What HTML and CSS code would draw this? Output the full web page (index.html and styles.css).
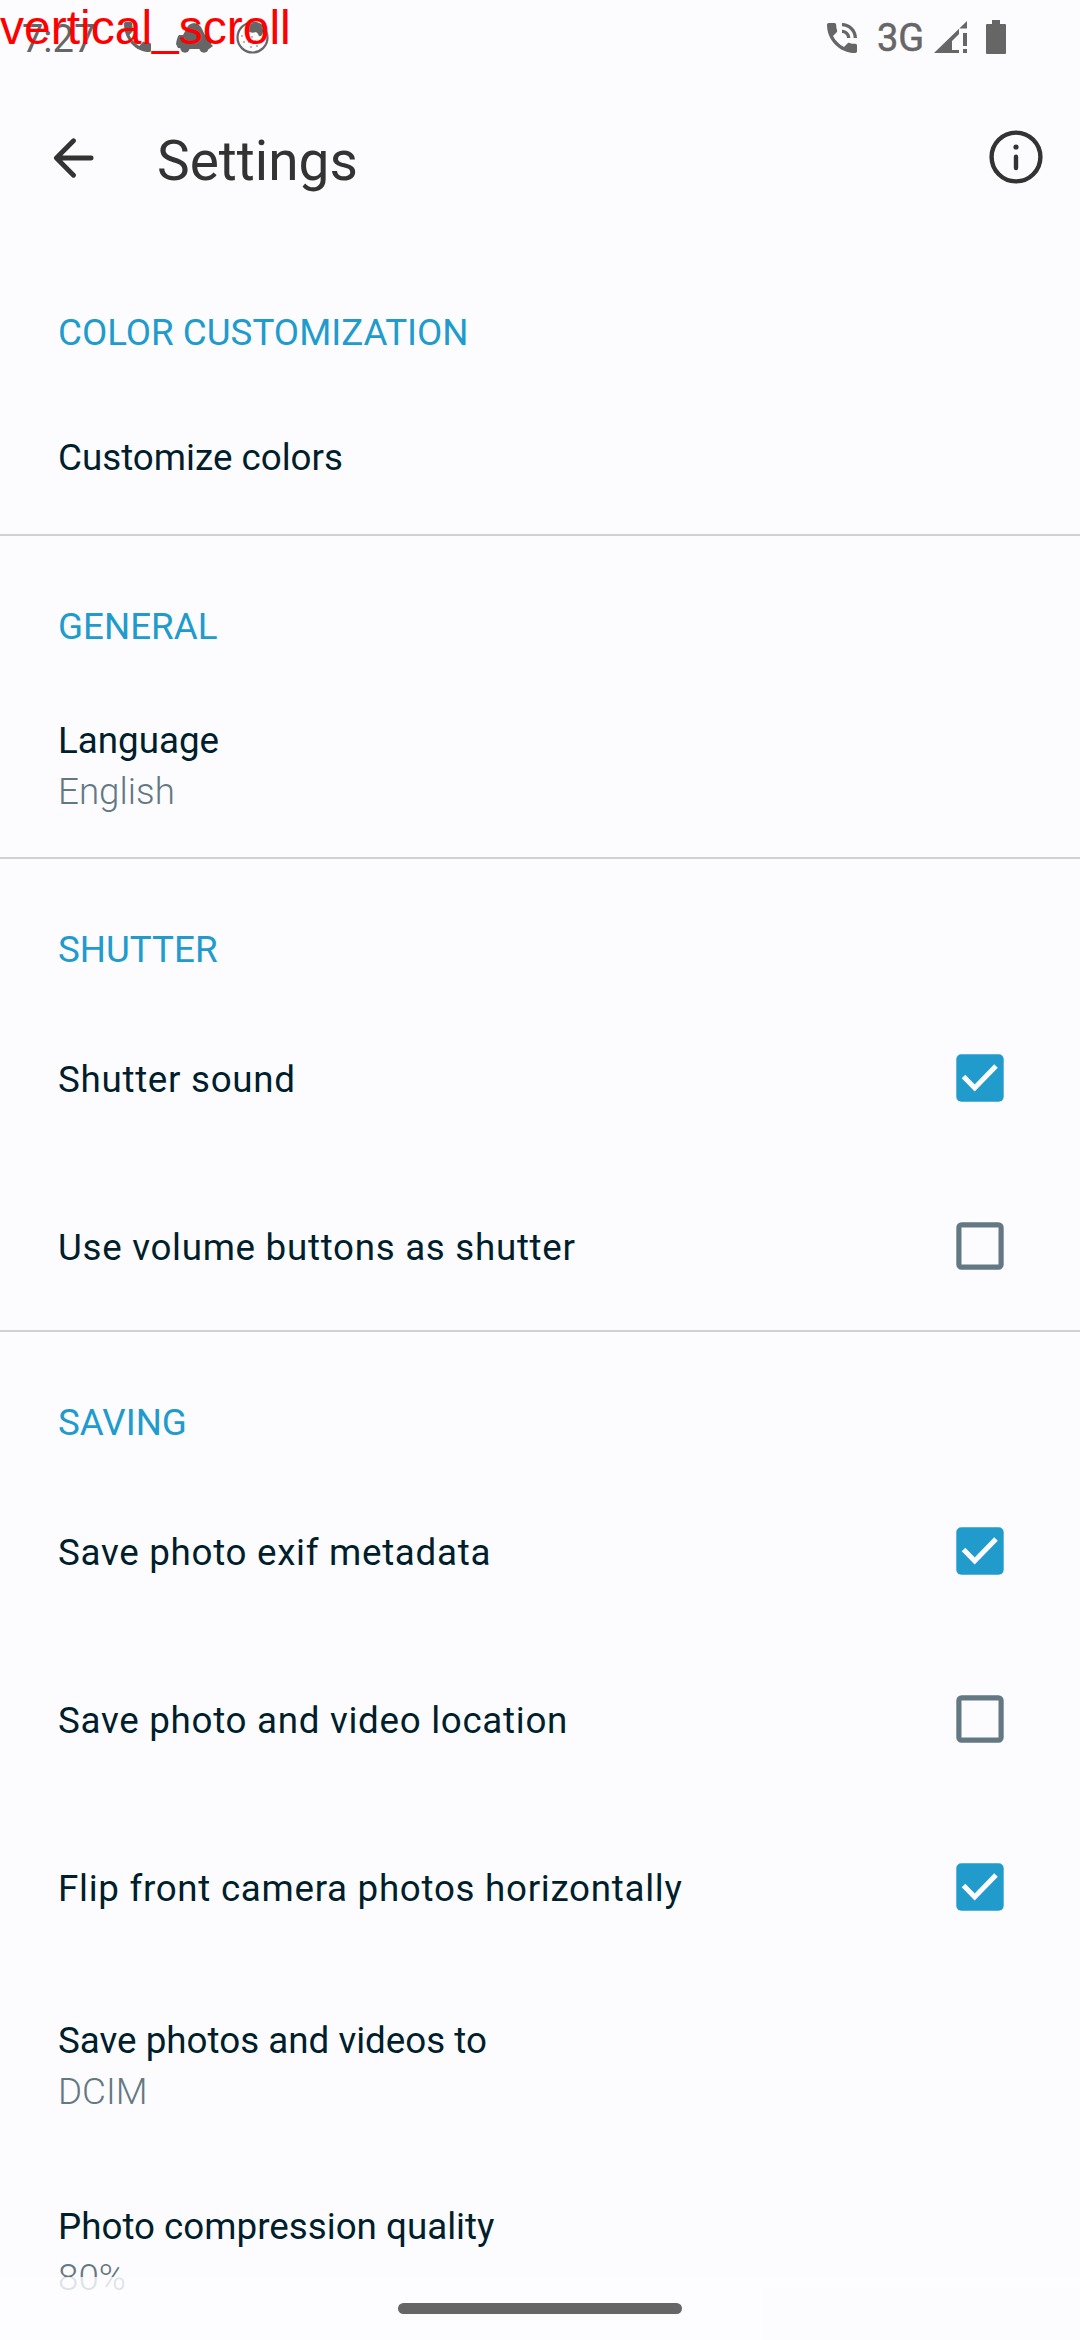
FILE: index.html
```html
<!DOCTYPE html>
<html lang="en">
<head>
<meta charset="utf-8">
<title>Settings</title>
<link rel="stylesheet" href="styles.css">
</head>
<body>
<div class="screen">
  <div class="status">
    <div class="status-left">
      <span class="clock">7:27</span>
      <svg class="ic-call" viewBox="3 3 18 18" preserveAspectRatio="none"><path d="M20 15.5c-1.25 0-2.45-.2-3.57-.57-.35-.11-.74-.03-1.02.24l-2.2 2.2c-2.83-1.44-5.15-3.75-6.59-6.59l2.2-2.21c.28-.26.36-.65.25-1C8.7 6.45 8.5 5.25 8.5 4c0-.55-.45-1-1-1H4c-.55 0-1 .45-1 1 0 9.39 7.61 17 17 17 .55 0 1-.45 1-1v-3.5c0-.55-.45-1-1-1z"/></svg>
      <svg class="ic-car" viewBox="0 0 37 30"><path d="M7 12L11 5Q12 1 18 0Q24 1 26 6L29 12L33 14Q36 15 35 21L37 23L33 26H14L2 25L0 21Q1 14 3 12Z"/><circle cx="9" cy="25" r="4.7"/><circle cx="28" cy="25" r="4.7"/></svg>
      <svg class="ic-face" viewBox="0 0 33 33"><circle cx="16.5" cy="16.5" r="15" fill="none" stroke="#666" stroke-width="2.2"/><path d="M10 9Q12 2 18 2Q26 3 29 12L27 11Q26 16 23 15Q22 12 20 11Q15 13 10 9Z"/><g><circle cx="6" cy="15" r=".8"/><circle cx="11" cy="14" r=".8"/><circle cx="16" cy="16" r=".8"/><circle cx="8" cy="21" r=".8"/><circle cx="13" cy="21" r=".8"/><circle cx="19" cy="20" r=".8"/><circle cx="25" cy="20" r=".8"/><circle cx="15" cy="26" r=".8"/><circle cx="21" cy="25" r=".8"/></g></svg>
    </div>
    <div class="status-right">
      <svg class="ic-talk" viewBox="3 3 18 18"><path d="M20 15.5c-1.25 0-2.45-.2-3.57-.57-.35-.11-.74-.03-1.02.24l-2.2 2.2c-2.83-1.44-5.15-3.75-6.59-6.59l2.2-2.21c.28-.26.36-.65.25-1C8.7 6.45 8.5 5.25 8.5 4c0-.55-.45-1-1-1H4c-.55 0-1 .45-1 1 0 9.39 7.61 17 17 17 .55 0 1-.45 1-1v-3.5c0-.55-.45-1-1-1zM19 12h2c0-4.97-4.03-9-9-9v2c3.87 0 7 3.13 7 7zm-4 0h2c0-2.76-2.24-5-5-5v2c1.66 0 3 1.34 3 3z"/></svg>
      <span class="network">3G</span>
      <svg class="ic-signal" viewBox="0 0 33 32"><path fill-rule="evenodd" d="M0 32L33 0V7.5H25V32ZM18 20V29H25V13ZM29 12H33V25H29ZM29 28H33V32H29Z"/></svg>
      <svg class="ic-battery" viewBox="0 0 20 34"><path d="M6 0H14V4H19Q20 4 20 5V33Q20 34 19 34H1Q0 34 0 33V5Q0 4 1 4H6Z"/></svg>
    </div>
  </div>
  <header class="toolbar">
    <svg class="ic-back" viewBox="0 0 42 40"><path d="M38.2 20H4M20.5 2.8L3.4 20L20.5 37.2"/></svg>
    <h1 class="title">Settings</h1>
    <svg class="ic-info" viewBox="0 0 54 54"><circle cx="27" cy="27" r="24.4"/><path d="M27 26.7V38"/><circle class="dot" cx="27" cy="17" r="2.6"/></svg>
  </header>
  <main class="list">
    <section class="group">
      <h2 class="heading">COLOR CUSTOMIZATION</h2>
      <div class="row single"><span>Customize colors</span></div>
    </section>
    <section class="group">
      <h2 class="heading">GENERAL</h2>
      <div class="row double"><span>Language</span><span class="value">English</span></div>
    </section>
    <section class="group">
      <h2 class="heading">SHUTTER</h2>
      <div class="row toggle"><span>Shutter sound</span><svg class="box on" viewBox="0 0 48 48"><rect x=".3" y=".3" width="47.4" height="47.4" rx="5"/><path d="M7.5 22.5L18.7 34L40 12"/></svg></div>
      <div class="row toggle"><span>Use volume buttons as shutter</span><svg class="box" viewBox="0 0 48 48"><rect x="2.9" y="2.9" width="42.2" height="42.2" rx="2.6"/></svg></div>
    </section>
    <section class="group">
      <h2 class="heading">SAVING</h2>
      <div class="row toggle"><span>Save photo exif metadata</span><svg class="box on" viewBox="0 0 48 48"><rect x=".3" y=".3" width="47.4" height="47.4" rx="5"/><path d="M7.5 22.5L18.7 34L40 12"/></svg></div>
      <div class="row toggle"><span>Save photo and video location</span><svg class="box" viewBox="0 0 48 48"><rect x="2.9" y="2.9" width="42.2" height="42.2" rx="2.6"/></svg></div>
      <div class="row toggle"><span>Flip front camera photos horizontally</span><svg class="box on" viewBox="0 0 48 48"><rect x=".3" y=".3" width="47.4" height="47.4" rx="5"/><path d="M7.5 22.5L18.7 34L40 12"/></svg></div>
      <div class="row double"><span>Save photos and videos to</span><span class="value">DCIM</span></div>
      <div class="row double"><span>Photo compression quality</span><span class="value">80%</span></div>
    </section>
  </main>
  <div class="navbar"><div class="handle"></div></div>
  <div class="label">vertical_scroll</div>
</div>
</body>
</html>
```
FILE: styles.css
```css
* { box-sizing: border-box; }
body { margin: 0; background: #fcfcff; font-family: Roboto, sans-serif; }
.screen { position: relative; width: 1080px; height: 2340px; overflow: hidden; background: #fcfcff; color: #001e2b; font-size: 36.75px; line-height: 43px; }
svg { display: block; flex: none; }

.status { display: flex; justify-content: space-between; height: 74px; padding: 0 74px 0 22px; color: #666; fill: #666; }
.status-left, .status-right { display: flex; align-items: flex-start; }
.clock { width: 102px; padding-top: 17px; font-size: 38px; line-height: 44px; }
.ic-call { width: 27px; height: 30px; margin-top: 22px; }
.ic-car { width: 37px; height: 30px; margin: 22.5px 0 0 25px; }
.ic-face { width: 33px; height: 33px; margin: 21px 0 0 23px; }
.ic-talk { width: 30px; height: 30px; margin: 22.5px 20px 0 0; }
.network { width: 57px; padding-top: 16px; font-size: 38px; line-height: 44px; -webkit-text-stroke: 0.5px #666; }
.ic-signal { width: 33px; height: 32px; margin-top: 21px; }
.ic-battery { width: 20px; height: 34px; margin: 20px 0 0 19px; }

.toolbar { display: flex; align-items: center; height: 168px; padding: 0 37px 0 53px; color: #333; }
.ic-back { width: 42px; height: 40px; margin-bottom: 1px; fill: none; stroke: #333; stroke-width: 4.8; stroke-linecap: round; stroke-linejoin: round; }
.title { flex: 1; margin: 5px 0 0 62px; font-size: 55px; line-height: 64px; font-weight: 400; }
.ic-info { width: 54px; height: 54px; margin-bottom: 2px; fill: none; stroke: #333; stroke-width: 4.4; stroke-linecap: round; }
.dot { fill: #333; stroke: none; }

.group { border-bottom: 2px solid #d0d1d4; }
.group:last-child { border: 0; }
.heading { height: 135px; margin: 0; padding: 69px 58px 0; font-size: 36.75px; line-height: 43px; font-weight: 400; color: #219bcc; }
.row { display: flex; padding: 0 76px 0 58px; }
.single { height: 157px; padding-top: 59px; }
.double { flex-direction: column; gap: 8px; height: 186px; padding-top: 48px; }
.value { font-weight: 300; color: #647883; }
.toggle { align-items: center; justify-content: space-between; height: 168px; letter-spacing: 0.7px; }
.toggle span { padding-top: 3px; }
.box { width: 48px; height: 48px; fill: none; stroke: #647883; stroke-width: 5.2; }
.on rect { fill: #219bcc; stroke: none; }
.on path { stroke: #fcfcff; stroke-width: 5; }

.navbar { position: absolute; left: 0; bottom: 0; display: flex; justify-content: center; width: 1080px; height: 63px; padding-top: 26px; background: rgba(252, 252, 255, 0.8); }
.handle { width: 284px; height: 11px; border-radius: 5.5px; background: #666; }
.label { position: absolute; left: 0; top: 0; font: 48px/55px "Liberation Sans", sans-serif; color: #f00; }
```
